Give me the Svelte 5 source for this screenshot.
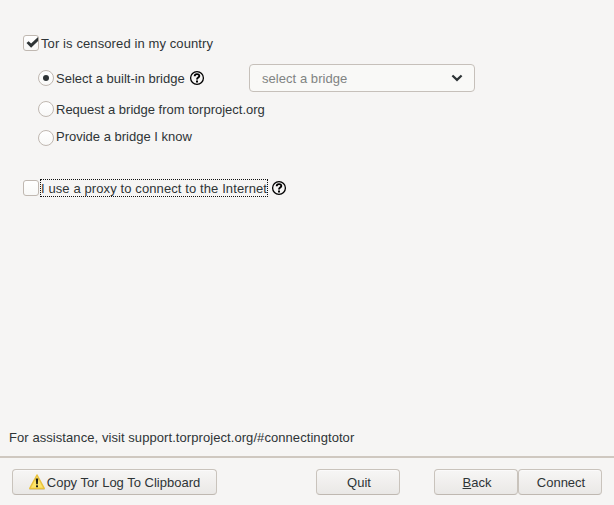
<script>
  let censored = $state(true);
  let proxy = $state(false);
  let bridge = $state('builtin');
</script>

{#snippet help()}
  <svg class="help" width="16" height="16" viewBox="0 0 16 16" aria-hidden="true">
    <circle cx="8" cy="8" r="6.4" fill="none" stroke="#000" stroke-width="1.3" />
    <path d="M5.7 6.3C5.7 3.5 10.3 3.5 10.3 6C10.3 7.6 8 7.6 8 9.5" fill="none" stroke="#000" stroke-width="1.9" />
    <rect x="7" y="10.5" width="2" height="2" fill="#000" />
  </svg>
{/snippet}

{#snippet box(on)}
  <span class="box">
    {#if on}
      <svg width="16" height="16" viewBox="0 0 16 16">
        <path d="M3.5 7.9L5.6 6.2L8.1 8.6L15.1 2V5.9L8.1 12.8Z" fill="#2e3436" />
      </svg>
    {/if}
  </span>
{/snippet}

<main>
  <section class="settings">
    <button class="option censored" role="checkbox" aria-checked={censored} onclick={() => (censored = !censored)}>
      {@render box(censored)}<span class="label">Tor is censored in my country</span>
    </button>

    <div class="bridges" role="radiogroup">
      <div class="row first">
        <button class="option" role="radio" aria-checked={bridge === 'builtin'} onclick={() => (bridge = 'builtin')}>
          <span class="radio" class:on={bridge === 'builtin'}></span><span class="text">Select a built-in bridge</span>
        </button>
        {@render help()}
        <button class="select">
          <span>select a bridge</span>
          <svg width="12" height="8" viewBox="0 0 12 8"><path d="M1.4 1.5L6 5.9L10.6 1.5" fill="none" stroke="#2e3436" stroke-width="2.2" /></svg>
        </button>
      </div>
      <div class="row second">
        <button class="option" role="radio" aria-checked={bridge === 'request'} onclick={() => (bridge = 'request')}>
          <span class="radio" class:on={bridge === 'request'}></span><span class="text">Request a bridge from torproject.org</span>
        </button>
      </div>
      <div class="row third">
        <button class="option" role="radio" aria-checked={bridge === 'own'} onclick={() => (bridge = 'own')}>
          <span class="radio" class:on={bridge === 'own'}></span><span class="text">Provide a bridge I know</span>
        </button>
      </div>
    </div>

    <div class="row proxy">
      <button class="option" role="checkbox" aria-checked={proxy} onclick={() => (proxy = !proxy)}>
        {@render box(proxy)}<span class="label focused">I use a proxy to connect to the Internet</span>
      </button>
      {@render help()}
    </div>
  </section>

  <p>For assistance, visit support.torproject.org/#connectingtotor</p>

  <footer>
    <button class="btn copy">
      <svg width="16" height="16" viewBox="0 0 16 16">
        <rect x="0.3" y="14.6" width="15.4" height="1.2" rx="0.6" fill="#c9c5bb" />
        <path d="M8 1L15.2 14.4H0.8Z" fill="#fce469" stroke="#e9c13c" stroke-width="1.5" stroke-linejoin="round" />
        <path d="M6.8 4.5H9.2L8.8 10.3H7.2Z" fill="#1c1c14" />
        <rect x="7" y="11.2" width="2" height="2" rx="0.5" fill="#1c1c14" />
      </svg>
      <span>Copy Tor Log To Clipboard</span>
    </button>
    <button class="btn quit">Quit</button>
    <button class="btn"><span><u>B</u>ack</span></button>
    <button class="btn">Connect</button>
  </footer>
</main>

<style>
  :global(body) {
    background: #f6f5f4;
  }
  main {
    box-sizing: border-box;
    width: 614px;
    height: 505px;
    display: flex;
    flex-direction: column;
    background: #f6f5f4;
    color: #2e3436;
    font: 13px/17px 'Liberation Sans', Arial, sans-serif;
  }
  button {
    font: inherit;
    color: inherit;
    padding: 0;
    border: 0;
    background: none;
    white-space: nowrap;
    outline: none;
  }
  svg {
    display: block;
    flex: none;
  }
  .settings {
    flex: 1;
    padding: 35px 0 0 23px;
  }
  .option {
    display: flex;
    align-items: center;
    height: 16px;
  }
  .box,
  .radio {
    box-sizing: border-box;
    flex: none;
    width: 16px;
    height: 16px;
    border: 1px solid #c0b8b1;
    background: linear-gradient(#fff, #f8f8f7);
  }
  .box {
    border-radius: 3px;
  }
  .box svg {
    margin: -1px;
  }
  .radio {
    display: flex;
    align-items: center;
    justify-content: center;
    border-radius: 50%;
    margin-right: 2px;
  }
  .radio.on::after {
    content: '';
    width: 6px;
    height: 6px;
    border-radius: 50%;
    background: #2e3436;
  }
  .label {
    height: 16px;
    border: 1px solid transparent;
    margin-left: 1px;
    line-height: 18px;
    letter-spacing: 0.105px;
  }
  .label.focused {
    border: 1px dotted #111;
  }
  .bridges {
    padding-left: 15px;
  }
  .row {
    display: flex;
    align-items: center;
  }
  .first {
    height: 28px;
    margin-top: 13px;
  }
  .first .help {
    margin-left: 4px;
  }
  .select {
    box-sizing: border-box;
    display: flex;
    align-items: center;
    justify-content: space-between;
    width: 226px;
    height: 28px;
    margin-left: auto;
    margin-right: 139px;
    padding: 0 11px 0 12px;
    border: 1px solid #c6c0ba;
    border-radius: 4px;
    background: #f9f9f7;
    color: #808382;
    letter-spacing: 0.05px;
  }
  .second {
    margin-top: 9px;
  }
  .second .text {
    margin-top: 1px;
  }
  .third {
    margin-top: 13px;
  }
  .third .text {
    margin-top: -3px;
  }
  .proxy {
    margin-top: 34px;
  }
  .proxy .help {
    margin-left: 3px;
  }
  p {
    margin: 0 0 10px 9px;
    letter-spacing: 0.07px;
  }
  footer {
    box-sizing: border-box;
    height: 49px;
    display: flex;
    padding: 11px 12px 0;
    border-top: 2px solid #cfc8c0;
  }
  .btn {
    box-sizing: border-box;
    width: 84px;
    height: 26px;
    display: flex;
    align-items: center;
    justify-content: center;
    padding-left: 2px;
    border: 1px solid #c9c3bc;
    border-bottom-color: #bfb8b1;
    border-radius: 4px;
    background: linear-gradient(#f7f6f5, #eae8e6);
    box-shadow: inset 0 1px #fbfafa;
  }
  .copy {
    width: 205px;
    gap: 2px;
    padding-left: 0;
  }
  .quit {
    margin-left: 99px;
    margin-right: 34px;
  }
  u {
    text-underline-offset: 1px;
    text-decoration-thickness: 1px;
  }
</style>
